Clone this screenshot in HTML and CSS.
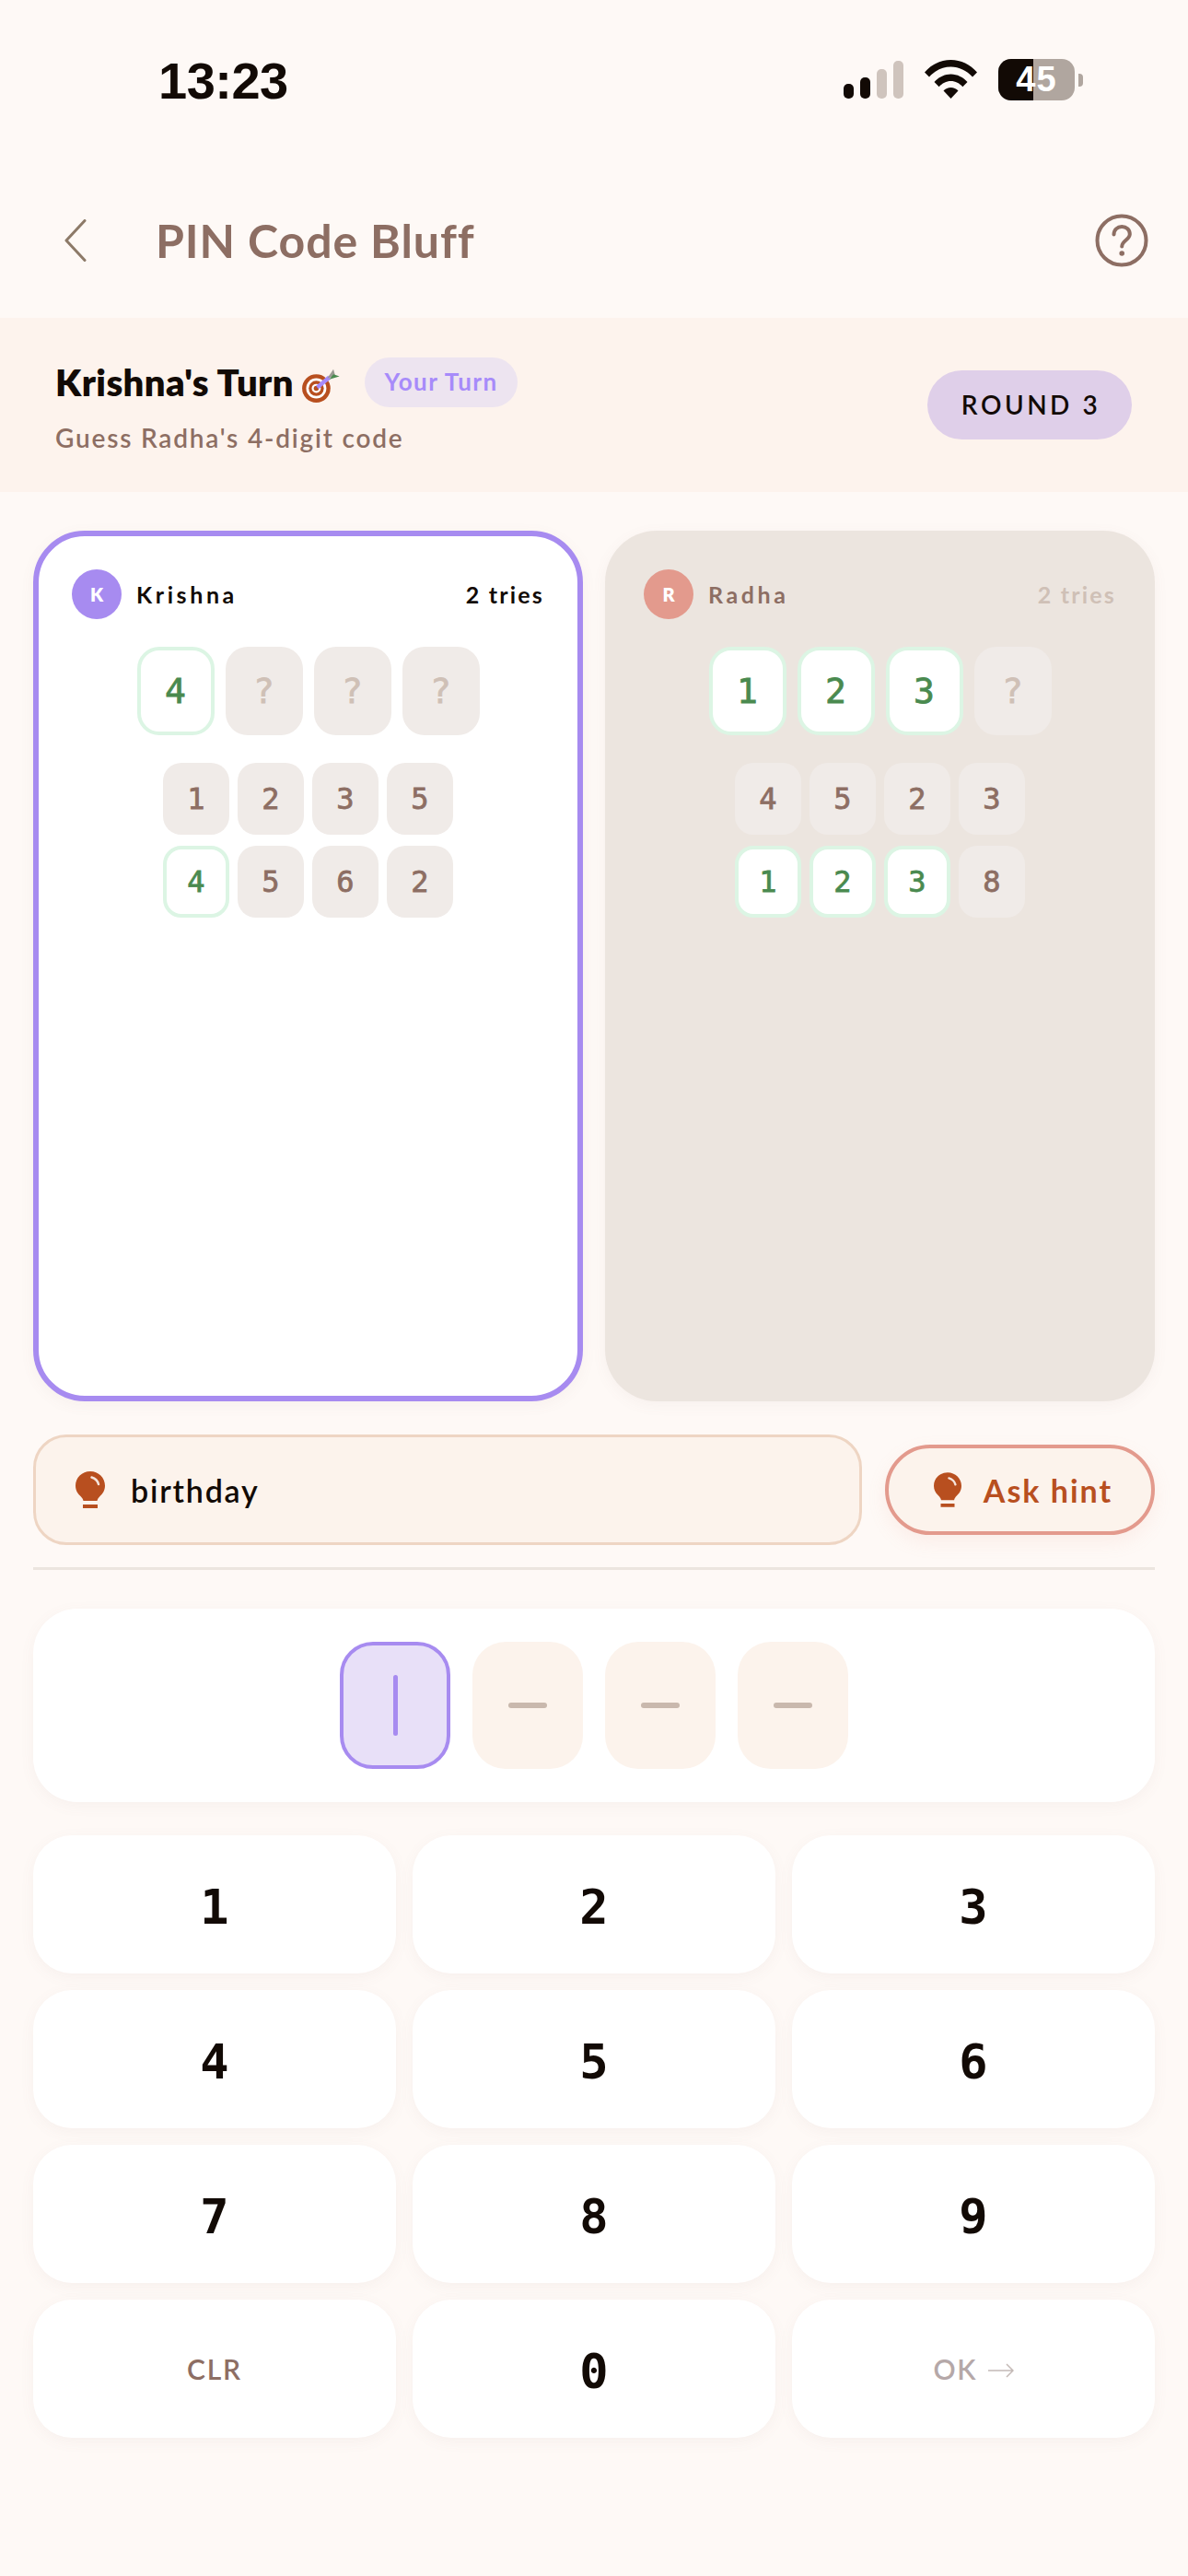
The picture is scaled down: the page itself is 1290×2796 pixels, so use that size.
FILE: index.html
```html
<!DOCTYPE html>
<html lang="en">
<head>
<meta charset="utf-8">
<title>PIN Code Bluff</title>
<link rel="stylesheet" href="styles.css">
</head>
<body>
<div class="screen">
  <div class="status">
    <span class="time">13:23</span>
    <div class="status-icons">
      <div class="signal">
        <i class="bar b1"></i><i class="bar b2"></i><i class="bar b3"></i><i class="bar b4"></i>
      </div>
      <svg class="wifi" width="57" height="43" viewBox="0 0 57 43"><path d="M0 14.500C7.500 6 17.500 1 28.500 1S49.500 6 57 14.500l-5 5C45.500 12.500 37.500 8.500 28.500 8.500S11.500 12.500 5 19.500z" fill="#120a05"/><path d="M10.500 25C15 20 21.500 16.500 28.500 16.500S42 20 46.500 25l-5.200 5.200C38 26.500 33.500 24 28.500 24S19 26.500 15.700 30.200z" fill="#120a05"/><path d="M20.500 34.500C22.500 32.500 25.500 31 28.500 31S34.500 32.500 36.500 34.500L28.500 43z" fill="#120a05"/></svg>
      <div class="battery">
        <div class="battery-body"><i class="battery-fill"></i><span class="battery-num">45</span></div>
        <i class="battery-nib"></i>
      </div>
    </div>
  </div>

  <header class="topbar">
    <svg class="back" width="24" height="46" viewBox="0 0 24 46"><path d="M22 1.500 2 23l20 21.500" fill="none" stroke="#8d7a68" stroke-width="3" stroke-linecap="round" stroke-linejoin="round"/></svg>
    <h1 class="title">PIN Code Bluff</h1>
    <svg class="help" width="58" height="58" viewBox="0 0 58 58"><circle cx="29" cy="29" r="26.500" fill="none" stroke="#8d6e63" stroke-width="4"/><path d="M20.500 22.500c0-5 3.800-8.500 8.700-8.500s8.600 3.300 8.600 8c0 6.500-8.600 7-8.600 13.500" fill="none" stroke="#8d6e63" stroke-width="4" stroke-linecap="round"/><circle cx="29.200" cy="43" r="2.800" fill="#8d6e63"/></svg>
  </header>

  <section class="turn">
    <div class="turn-info">
      <div class="turn-line">
        <span class="turn-name">Krishna's Turn</span>
        <svg class="target" width="46" height="46" viewBox="0 0 42 42"><circle cx="15" cy="27" r="14" fill="#b84f1f"/><circle cx="15" cy="27" r="10" fill="#fff"/><circle cx="15" cy="27" r="7.500" fill="#b84f1f"/><circle cx="15" cy="27" r="4.500" fill="#fff"/><circle cx="15" cy="27" r="2.500" fill="#b84f1f"/><path d="M16 26 28 16" stroke="#a78bfa" stroke-width="4"/><path d="M26 17l6-9 2 7z" fill="#9a9a92"/><path d="M28 18l10-3-6-2z" fill="#4a8a4f"/></svg>
        <span class="your-turn">Your Turn</span>
      </div>
      <p class="turn-sub">Guess Radha's 4-digit code</p>
    </div>
    <span class="round">ROUND 3</span>
  </section>

  <main class="content">
    <div class="boards">
      <section class="board board-active">
        <div class="board-head">
          <span class="avatar avatar-k">K</span>
          <span class="player">Krishna</span>
          <span class="tries">2 tries</span>
        </div>
        <div class="code-row">
          <span class="big good">4</span><span class="big unknown">?</span><span class="big unknown">?</span><span class="big unknown">?</span>
        </div>
        <div class="guesses">
          <div class="guess-row"><span class="small">1</span><span class="small">2</span><span class="small">3</span><span class="small">5</span></div>
          <div class="guess-row"><span class="small good">4</span><span class="small">5</span><span class="small">6</span><span class="small">2</span></div>
        </div>
      </section>
      <section class="board board-idle">
        <div class="board-head">
          <span class="avatar avatar-r">R</span>
          <span class="player player-idle">Radha</span>
          <span class="tries tries-idle">2 tries</span>
        </div>
        <div class="code-row">
          <span class="big good">1</span><span class="big good">2</span><span class="big good">3</span><span class="big unknown">?</span>
        </div>
        <div class="guesses">
          <div class="guess-row"><span class="small">4</span><span class="small">5</span><span class="small">2</span><span class="small">3</span></div>
          <div class="guess-row"><span class="small good">1</span><span class="small good">2</span><span class="small good">3</span><span class="small">8</span></div>
        </div>
      </section>
    </div>

    <div class="hint-row">
      <div class="hint-box">
        <svg class="bulb" width="32" height="40" viewBox="0 0 32 40"><path d="M16 0C7 0 0 7 0 15.500c0 5.500 2.800 9 5.500 11.500 1.500 1.500 2.500 3 3 5h15c.5-2 1.500-3.500 3-5 2.700-2.500 5.500-6 5.500-11.500C32 7 25 0 16 0z" fill="#b84f1f"/><path d="M17.500 6.500c4 1.200 6.500 3.700 7.500 7.500" fill="none" stroke="#fff" stroke-width="2.500" stroke-linecap="round" opacity=".85"/><rect x="8" y="36" width="16" height="4" fill="#b84f1f"/></svg>
        <span class="hint-text">birthday</span>
      </div>
      <button class="ask">
        <svg class="bulb" width="30" height="38" viewBox="0 0 32 40"><path d="M16 0C7 0 0 7 0 15.500c0 5.500 2.800 9 5.500 11.500 1.500 1.500 2.500 3 3 5h15c.5-2 1.500-3.500 3-5 2.700-2.500 5.500-6 5.500-11.500C32 7 25 0 16 0z" fill="#b84f1f"/><path d="M17.500 6.500c4 1.200 6.500 3.700 7.500 7.500" fill="none" stroke="#fff" stroke-width="2.500" stroke-linecap="round" opacity=".85"/><rect x="8" y="36" width="16" height="4" fill="#b84f1f"/></svg>
        <span>Ask hint</span>
      </button>
    </div>

    <hr class="divider">

    <div class="entry">
      <div class="slot slot-active"><i class="caret"></i></div>
      <div class="slot"><i class="dash"></i></div>
      <div class="slot"><i class="dash"></i></div>
      <div class="slot"><i class="dash"></i></div>
    </div>

    <div class="keypad">
      <button class="key">1</button><button class="key">2</button><button class="key">3</button>
      <button class="key">4</button><button class="key">5</button><button class="key">6</button>
      <button class="key">7</button><button class="key">8</button><button class="key">9</button>
      <button class="key key-clr">CLR</button><button class="key">0</button>
      <button class="key key-ok">OK <svg class="ok-arrow" width="28" height="16" viewBox="0 0 28 16"><path d="M0 8h27M20 1l7 7-7 7" fill="none" stroke="#c4b9b6" stroke-width="1.500"/></svg></button>
    </div>
  </main>
</div>
</body>
</html>
```
FILE: styles.css
```css
* { box-sizing: border-box; }
html, body { margin: 0; padding: 0; }
body {
  width: 1290px;
  height: 2796px;
  background: #fef9f6;
  font-family: "Lato", "Noto Sans", sans-serif;
  color: #120a05;
  overflow: hidden;
}
.screen { width: 1290px; height: 2796px; display: flex; flex-direction: column; }

.status {
  height: 176px;
  padding: 0 0 0 172px;
  display: flex;
  justify-content: space-between;
  align-items: flex-start;
}
.time {
  margin-top: 54px;
  font-family: "Liberation Sans", sans-serif;
  font-size: 56px;
  line-height: 68px;
  font-weight: 700;
  letter-spacing: -.5px;
}
.status-icons {
  margin-top: 64px;
  width: 261px;
  margin-right: 113px;
  display: flex;
  align-items: flex-start;
}
.signal { display: flex; gap: 7px; align-items: flex-end; height: 43px; width: 65px; }
.bar { display: block; width: 11px; border-radius: 5px; background: #cfc4bd; }
.b1 { height: 16px; background: #120a05; }
.b2 { height: 23px; background: #120a05; }
.b3 { height: 32px; }
.b4 { height: 41px; }
.wifi { margin-left: 23px; }
.battery { margin-left: 23px; display: flex; align-items: center; }
.battery-body {
  position: relative;
  width: 83px;
  height: 45px;
  border-radius: 14px;
  background: #b0a69f;
  overflow: hidden;
  display: flex;
  align-items: center;
  justify-content: center;
}
.battery-fill { position: absolute; left: 0; top: 0; bottom: 0; width: 38px; background: #120a05; }
.battery-num {
  position: relative;
  color: #fff;
  font-family: "Liberation Sans", sans-serif;
  font-weight: 700;
  font-size: 38px;
  letter-spacing: 1px;
}
.battery-nib { width: 5px; height: 14px; margin-left: 4px; border-radius: 0 4px 4px 0; background: #b0a69f; }

.topbar {
  height: 169px;
  padding: 0 43px 0 70px;
  display: flex;
  align-items: center;
}
.title {
  flex: 1;
  margin: 0 0 0 75px;
  font-size: 50px;
  line-height: 60px;
  font-weight: 700;
  letter-spacing: .9px;
  color: #8d6e63;
}

.turn {
  height: 189px;
  background: #fdf3ed;
  padding: 0 61px 0 60px;
  display: flex;
  justify-content: space-between;
  align-items: center;
}
.turn-line { display: flex; align-items: center; }
.turn-name { font-size: 40px; line-height: 54px; font-weight: 800; letter-spacing: .4px; }
.target { margin-left: 8px; }
.your-turn {
  margin-left: 23px;
  height: 54px;
  width: 166px;
  text-align: center;
  border-radius: 27px;
  background: #ede4f0;
  color: #a78bfa;
  font-size: 26px;
  line-height: 52px;
  font-weight: 700;
  letter-spacing: 1.400px;
}
.turn-sub {
  margin: 16px 0 0;
  font-size: 28px;
  line-height: 34px;
  font-weight: 600;
  letter-spacing: 1.800px;
  color: #8d6e63;
}
.round {
  height: 75px;
  width: 222px;
  padding-left: 3px;
  text-align: center;
  border-radius: 38px;
  background: #dfcfe9;
  font-size: 28px;
  line-height: 75px;
  font-weight: 600;
  letter-spacing: 3.500px;
}

.content { padding: 42px 36px 0; display: flex; flex-direction: column; }
.boards { display: grid; grid-template-columns: 1fr 1fr; gap: 24px; height: 945px; }
.board {
  border-radius: 56px;
  padding: 42px;
  display: flex;
  flex-direction: column;
  align-items: center;
}
.board-active { background: #fff; border: 6px solid #a78bf0; padding: 36px; box-shadow: 0 4px 16px rgba(141, 110, 99, .06); }
.board-idle { background: #ece5df; box-shadow: 0 4px 16px rgba(141, 110, 99, .06); }
.board-head { width: 100%; height: 54px; display: flex; align-items: center; }
.avatar {
  width: 54px;
  height: 54px;
  border-radius: 50%;
  color: #fff;
  font-size: 20px;
  font-weight: 800;
  display: flex;
  align-items: center;
  justify-content: center;
}
.avatar-k { background: #a78bf0; }
.avatar-r { background: #e39a8d; }
.player { margin-left: 16px; flex: 1; font-size: 25px; font-weight: 700; letter-spacing: 3.600px; }
.player-idle { color: #8d6e63; }
.tries { font-size: 25px; font-weight: 700; letter-spacing: 2.200px; }
.tries-idle { color: #cfc0b6; }

.code-row { margin-top: 30px; display: flex; gap: 12px; flex-shrink: 0; }
.big, .small {
  font-family: "DejaVu Sans Mono", monospace;
  display: flex;
  align-items: center;
  justify-content: center;
  background: #f0ebe8;
  -webkit-text-stroke: .8px currentColor;
}
.big { width: 84px; height: 96px; border-radius: 24px; font-size: 38px; }
.small { width: 72px; height: 78px; border-radius: 20px; font-size: 32px; color: #8d6e63; }
.unknown { color: #cfc0b6; }
.good { background: #fff; border: 4px solid #dcf5e4; color: #4a8a4f; }

.guesses { margin-top: 30px; display: flex; flex-direction: column; gap: 12px; }
.guess-row { display: flex; gap: 9px; }

.hint-row { margin-top: 36px; display: flex; align-items: center; gap: 25px; }
.hint-box {
  flex: 1;
  height: 120px;
  padding: 0 43px;
  border: 3px solid #eed5c3;
  border-radius: 36px;
  background: #fcf3ec;
  display: flex;
  align-items: center;
  gap: 28px;
}
.hint-text { font-size: 34px; font-weight: 600; letter-spacing: 1.800px; }
.ask {
  width: 293px;
  height: 98px;
  padding: 0 0 0 7px;
  border: 4px solid #e39a8d;
  border-radius: 49px;
  background: #fcf3ec;
  color: #b84f1f;
  font-family: inherit;
  font-size: 34px;
  font-weight: 700;
  letter-spacing: 2px;
  display: flex;
  align-items: center;
  justify-content: center;
  gap: 24px;
  box-shadow: 0 8px 20px rgba(227, 154, 141, .12);
}
.divider { width: 100%; height: 3px; margin: 24px 0 42px; border: 0; background: #ece5df; }

.entry {
  height: 210px;
  border-radius: 48px;
  background: #fff;
  display: flex;
  justify-content: center;
  align-items: center;
  gap: 24px;
  box-shadow: 0 4px 16px rgba(141, 110, 99, .06);
}
.slot {
  width: 120px;
  height: 138px;
  border-radius: 36px;
  background: #fcf3ec;
  display: flex;
  align-items: center;
  justify-content: center;
}
.slot-active { background: #e8e0f8; border: 4px solid #a78bf0; }
.caret { width: 5px; height: 66px; border-radius: 3px; background: #a78bf0; }
.dash { width: 42px; height: 6px; border-radius: 3px; background: #c9b8ad; }

.keypad { margin-top: 36px; display: grid; grid-template-columns: repeat(3, 1fr); grid-auto-rows: 150px; gap: 18px; }
.key {
  border: 0;
  padding: 6px 0 0;
  border-radius: 42px;
  background: #fff;
  color: #120a05;
  font-family: "DejaVu Sans Mono", monospace;
  font-size: 52px;
  font-weight: 700;
  box-shadow: 0 4px 16px rgba(141, 110, 99, .06);
}
.key-clr, .key-ok { padding: 0; font-family: "Lato", sans-serif; font-size: 30px; font-weight: 600; letter-spacing: 1.800px; }
.key-clr { color: #8d6e63; }
.key-ok { color: #b5a8a8; }
.ok-arrow { vertical-align: 2px; margin-left: 2px; }
```
